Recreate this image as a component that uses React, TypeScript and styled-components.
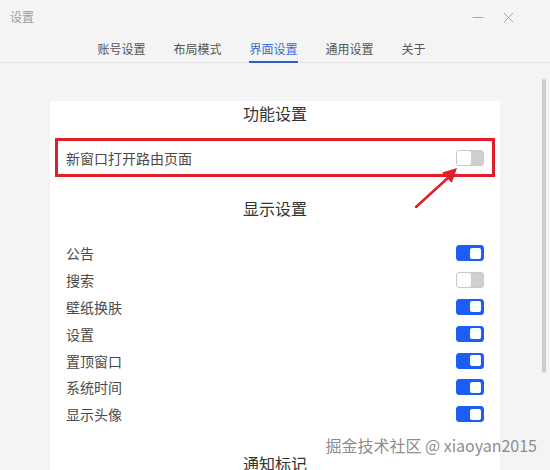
import styled, { createGlobalStyle } from "styled-components";

const GlobalStyle = createGlobalStyle`
  * {
    box-sizing: border-box;
  }
  body {
    margin: 0;
    background-color: #f4f4f4;
    font-family: "Noto Sans CJK SC", "Liberation Sans", sans-serif;
  }
`;

const Window = styled.div`
  position: relative;
  width: 550px;
  height: 470px;
  overflow: hidden;
  display: flex;
  flex-direction: column;
  background-color: #f4f4f4;
`;

const TitleBar = styled.header`
  height: 34px;
  display: flex;
  align-items: center;
  justify-content: space-between;
  padding: 0 27px 0 10px;
`;

const Title = styled.span`
  font-size: 12px;
  line-height: 16px;
  color: #9b9b9b;
`;

const WinButtons = styled.div`
  display: flex;
`;

const WinButton = styled.button`
  width: 30px;
  height: 34px;
  border: none;
  padding: 0;
  background: none;
  display: flex;
  align-items: center;
  justify-content: center;
  cursor: pointer;
`;

const TabBar = styled.nav`
  height: 29px;
  display: flex;
  justify-content: center;
  gap: 28px;
  padding-right: 27px;
  border-bottom: 1px solid #e4e4e4;
`;

const Tab = styled.div<{ $active?: boolean }>`
  height: 29px;
  display: flex;
  align-items: center;
  font-size: 12px;
  line-height: 16px;
  padding-top: 2px;
  color: ${(p) => (p.$active ? "#3a6bd6" : "#555")};
  border-bottom: 2px solid ${(p) => (p.$active ? "#2d5fc8" : "transparent")};
  margin-bottom: -1px;
  cursor: pointer;
`;

const Content = styled.main`
  flex: 1;
  padding: 25px 50px 0;
  overflow: hidden;
`;

const Card = styled.section`
  background-color: #fff;
  padding: 0 16px 40px;
`;

const SectionTitle = styled.h3<{ $mt: number; $mb: number }>`
  margin: ${(p) => p.$mt}px 0 ${(p) => p.$mb}px;
  font-size: 16px;
  line-height: 24px;
  font-weight: normal;
  color: #333;
  text-align: center;
`;

const Highlight = styled.div`
  margin: 0 -11px;
  padding: 0 8px;
  border: 3px solid #df1f2a;
`;

const Row = styled.div<{ $h: number }>`
  height: ${(p) => p.$h}px;
  display: flex;
  align-items: center;
  justify-content: space-between;
  font-size: 14px;
  color: #4a4a4a;
`;

const Switch = styled.button<{ $on: boolean }>`
  width: 28px;
  height: 16px;
  padding: 2px;
  border-radius: 3px;
  border: 1px solid ${(p) => (p.$on ? "#1b5ef6" : "#c9c9c9")};
  background-color: ${(p) => (p.$on ? "#1b5ef6" : "#cfcfcf")};
  display: flex;
  justify-content: ${(p) => (p.$on ? "flex-end" : "flex-start")};
  align-items: center;
  cursor: pointer;
  ${(p) => !p.$on && "padding: 0;"}
`;

const Knob = styled.span<{ $on: boolean }>`
  width: ${(p) => (p.$on ? 11 : 14)}px;
  height: ${(p) => (p.$on ? 11 : 14)}px;
  border-radius: 2px;
  background-color: #fff;
`;

const ScrollThumb = styled.div`
  position: absolute;
  right: 4px;
  top: 79px;
  width: 4px;
  height: 294px;
  border-radius: 2px;
  background-color: #cdcdcd;
`;

const Pointer = styled.svg`
  position: absolute;
  left: 410px;
  top: 162px;
  pointer-events: none;
`;

const Watermark = styled.div`
  position: absolute;
  right: 13px;
  bottom: 15px;
  font-size: 16px;
  line-height: 20px;
  color: rgba(110, 110, 110, 0.8);
  white-space: nowrap;
  pointer-events: none;
`;

const tabs = ["账号设置", "布局模式", "界面设置", "通用设置", "关于"];

const display = [
  { label: "公告", on: true },
  { label: "搜索", on: false },
  { label: "壁纸换肤", on: true },
  { label: "设置", on: true },
  { label: "置顶窗口", on: true },
  { label: "系统时间", on: true },
  { label: "显示头像", on: true },
];

function Toggle({ on }: { on: boolean }) {
  return (
    <Switch $on={on}>
      <Knob $on={on} />
    </Switch>
  );
}

export default function App() {
  return (
    <>
      <GlobalStyle />
      <Window>
        <TitleBar>
          <Title>设置</Title>
          <WinButtons>
            <WinButton>
              <svg width="12" height="12" viewBox="0 0 12 12">
                <line x1="0.5" y1="6.5" x2="11.5" y2="6.5" stroke="#aaa" strokeWidth="1" />
              </svg>
            </WinButton>
            <WinButton>
              <svg width="11" height="11" viewBox="0 0 11 11">
                <path d="M1 1 L10 10 M10 1 L1 10" stroke="#aaa" strokeWidth="1" />
              </svg>
            </WinButton>
          </WinButtons>
        </TitleBar>

        <TabBar>
          {tabs.map((t) => (
            <Tab key={t} $active={t === "界面设置"}>
              {t}
            </Tab>
          ))}
        </TabBar>

        <Content>
          <Card>
            <SectionTitle $mt={13} $mb={13}>
              功能设置
            </SectionTitle>
            <Highlight>
              <Row $h={33}>
                <span>新窗口打开路由页面</span>
                <Toggle on={false} />
              </Row>
            </Highlight>

            <SectionTitle $mt={19} $mb={20}>
              显示设置
            </SectionTitle>
            {display.map((d) => (
              <Row key={d.label} $h={26.8}>
                <span>{d.label}</span>
                <Toggle on={d.on} />
              </Row>
            ))}

            <SectionTitle $mt={23} $mb={13}>
              通知标记
            </SectionTitle>
          </Card>
        </Content>

        <ScrollThumb />

        <Pointer width="56" height="50" viewBox="0 0 56 50">
          <line x1="6" y1="45" x2="40" y2="14" stroke="#df1f2a" strokeWidth="2.5" strokeLinecap="round" />
          <polygon points="47,6 41.8,20.9 32,10.4" fill="#df1f2a" />
        </Pointer>

        <Watermark>掘金技术社区 @ xiaoyan2015</Watermark>
      </Window>
    </>
  );
}
